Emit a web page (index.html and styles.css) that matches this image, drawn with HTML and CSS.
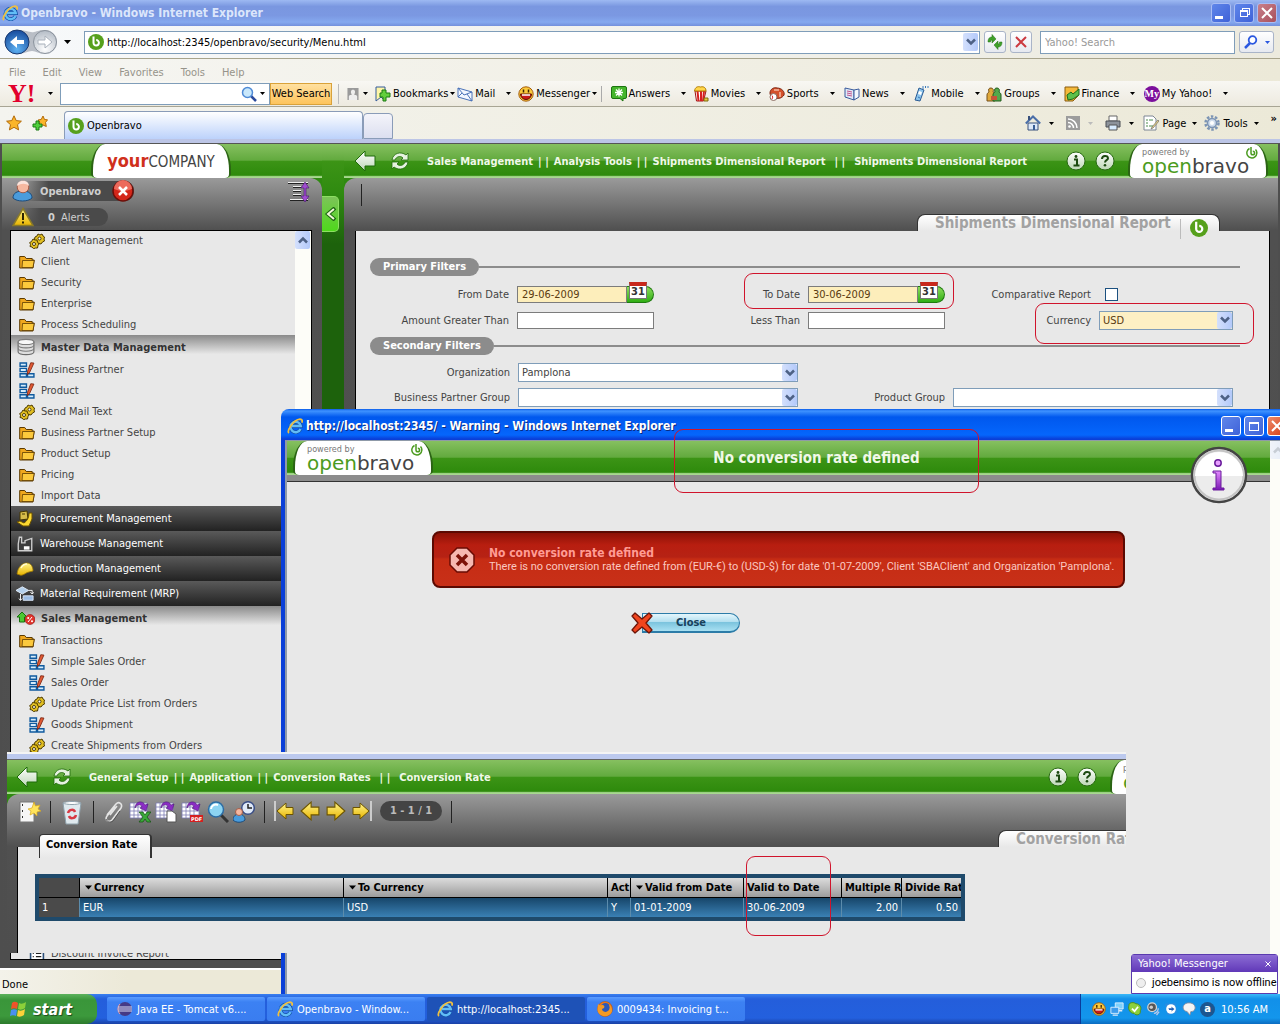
FILE: index.html
```html
<!DOCTYPE html>
<html lang="en">
  <head>
    <meta charset="UTF-8" />
    <title>Openbravo</title>
    <link rel="stylesheet" href="styles.css">
  </head>
  <body>
    <!-- Shared icons -->
    <svg class="sprite" width="0" height="0" aria-hidden="true">
      <defs>
        <linearGradient id="gYellow" x1="0" y1="0" x2="0" y2="1"><stop offset="0" stop-color="#fff48a" /><stop offset="1" stop-color="#e8b400" /></linearGradient>
        <linearGradient id="gPurple" x1="0" y1="0" x2="0" y2="1"><stop offset="0" stop-color="#e48bff" /><stop offset="1" stop-color="#7a16b4" /></linearGradient>
        <linearGradient id="gSilver" x1="0" y1="0" x2="0" y2="1"><stop offset="0" stop-color="#ffffff" /><stop offset="1" stop-color="#bcd6b4" /></linearGradient>
        <radialGradient id="gBlue" cx="0.5" cy="0.8" r="0.8"><stop offset="0" stop-color="#5fb2f2" /><stop offset="1" stop-color="#164a9c" /></radialGradient>
        <radialGradient id="gGrey" cx="0.5" cy="0.8" r="0.8"><stop offset="0" stop-color="#ffffff" /><stop offset="1" stop-color="#b4bcc6" /></radialGradient>
      </defs>
      <symbol id="ie" viewBox="0 0 16 16">
        <path d="M13.500 11A5.200 5.200 0 1 1 13.800 8H5" fill="none" stroke="#1450a8" stroke-width="3.800" />
        <path d="M13.500 11A5.200 5.200 0 1 1 13.800 8H5" fill="none" stroke="#62bdf6" stroke-width="2.400" />
        <path d="M2 15C-.5 13 6 2 13 1.200c2.500 0 2.500 2 1.800 3.500" fill="none" stroke="#f0c040" stroke-width="1.800" />
      </symbol>
      <symbol id="ob" viewBox="0 0 16 16">
        <circle cx="8" cy="8" r="8" fill="#56a01c" />
        <path d="M5.500 2.500v6.300a2.700 2.700 0 1 0 2.700-2.700" fill="none" stroke="#fff" stroke-width="2" />
      </symbol>
      <symbol id="obmark" viewBox="0 0 12 12">
        <path d="M3.500 1.500A5 5 0 1 0 9.500 2.500" fill="none" stroke="#4b9b20" stroke-width="1.500" />
        <path d="M5 0v6a1.800 1.800 0 1 0 1.800-1.800" fill="none" stroke="#4b9b20" stroke-width="1.500" />
      </symbol>
      <symbol id="nav" viewBox="0 0 56 26">
        <path d="M14 1C22 1 26 4 30 3c4-1 6-2 11-2a12 12 0 0 1 0 24c-6 0-9-3-13-3s-8 3-14 3a12 12 0 0 1 0-24z" fill="#b9bec6" />
        <circle cx="13" cy="13" r="12" fill="url(#gBlue)" stroke="#19386e" />
        <circle cx="41" cy="13" r="11.500" fill="url(#gGrey)" stroke="#8b939d" />
        <path d="M6 13l7-6v4h7v4h-7v4z" fill="#fff" />
        <path d="M48 13l-7-6v4h-7v4h7v4z" fill="#fff" stroke="#aab2bc" />
      </symbol>
      <symbol id="down" viewBox="0 0 7 4"><path d="M0 0h7L3.500 4z" fill="currentColor" /></symbol>
      <symbol id="chev" viewBox="0 0 10 8"><path d="M1 1.500l4 4 4-4" fill="none" stroke="#4d6185" stroke-width="2.500" /></symbol>
      <symbol id="reload" viewBox="0 0 16 16">
        <path d="M1 8c0-4 2-5 4-5V.5L9 5 5 9V6C4 6 3.500 7 3.500 8zM15 8c0 4-2 5-4 5v2.500L7 11l4-4v3c1 0 1.500-1 1.500-2z" fill="#3fa02a" stroke="#24701a" stroke-width=".5" />
      </symbol>
      <symbol id="cross" viewBox="0 0 12 12"><path d="M1 1l10 10M11 1L1 11" stroke="currentColor" stroke-width="2" /></symbol>
      <symbol id="lens" viewBox="0 0 16 16">
        <path d="M10 10l5 5" stroke="#2b4a9c" stroke-width="2.500" /><circle cx="6.500" cy="6.500" r="5" fill="#c9e8fb" stroke="#4f8bd6" stroke-width="1.500" />
      </symbol>
      <symbol id="find" viewBox="0 0 14 14"><path d="M6 8l-5 5" stroke="#2b58e0" stroke-width="2.500" /><circle cx="8.500" cy="5" r="3.800" fill="#fff" stroke="#2b58e0" stroke-width="1.800" /></symbol>
      <symbol id="star" viewBox="0 0 16 16"><path d="M8 .8l2.200 4.800 5.200.6-3.900 3.500 1.100 5.200L8 12.300l-4.600 2.600 1.100-5.200L.6 6.200l5.200-.6z" fill="#fbb52a" stroke="#b26a09" /></symbol>
      <symbol id="starplus" viewBox="0 0 16 16">
        <path d="M11 1l1.500 3.500 3 .3-2 2.700.8 4L11 10 7 11l.8-4L6 5l3.200-.5z" fill="#fbb52a" stroke="#b26a09" />
        <path d="M4 6h3v3h3v3H7v3H4v-3H1V9h3z" fill="#4fd03c" stroke="#1b7a14" />
      </symbol>
      <symbol id="person" viewBox="0 0 12 13"><rect width="12" height="13" fill="#9a9a9a" /><path d="M1.500 13V9c1-2 2-1 3-1.500V7C3 4 4 2 6 2s3 2 1.500 5v.5c1 .5 2-.5 3 1.500v4z" fill="#eee" /></symbol>
      <symbol id="bookmark" viewBox="0 0 16 16"><path d="M1 1h9v14l-4-4-5 4z" fill="#fff5a8" stroke="#355c9c" /><path d="M7 4h4v3h4v4h-4v4H8v-4H5V7h2z" fill="#62cf3c" stroke="#1b7a14" /></symbol>
      <symbol id="mail" viewBox="0 0 16 16"><path d="M1 2l14 4v9L1 11z" fill="#f2f7ff" stroke="#4a72b8" /><path d="M1 2l6 7 8-3M1 11l4-4M15 15l-5-7" fill="none" stroke="#4a72b8" /></symbol>
      <symbol id="smile" viewBox="0 0 16 16"><circle cx="8" cy="8" r="7.200" fill="#fbc93b" stroke="#a45c0c" /><path d="M2.500 8h11a5.500 5.500 0 0 1-11 0z" fill="#c81818" stroke="#5c1200" /><path d="M4 9h8" stroke="#fff" stroke-width="1.500" /><path d="M5.500 3.500v3M10.500 3.500v3" stroke="#3a2200" stroke-width="1.500" /></symbol>
      <symbol id="answers" viewBox="0 0 16 16"><path d="M2 .5h12a1.500 1.500 0 0 1 1.500 1.500v9a1.500 1.500 0 0 1-1.500 1.500h-2V15l-3-2.500H2A1.500 1.500 0 0 1 .5 11V2A1.500 1.500 0 0 1 2 .5z" fill="#45b52c" stroke="#1c7410" /><path d="M8 2.500v8M4 6.500h8M5 3.500l6 6M11 3.500l-6 6" stroke="#fff" stroke-width="1.300" /></symbol>
      <symbol id="movies" viewBox="0 0 16 16"><path d="M2 5l1.500 10h7L13 5z" fill="#fff" stroke="#a01010" /><path d="M4.500 5l1 10M8 5v10M11 5l-1 10" stroke="#d61f1f" stroke-width="2" /><path d="M1.500 5C2 1 5 0 7.500 1 11 0 13 2 13 5z" fill="#ffd64a" stroke="#b27c00" /><path d="M11 12h4v3h-4z" fill="#e8c83a" stroke="#7c6a10" /></symbol>
      <symbol id="sports" viewBox="0 0 16 16"><path d="M1 7C1 3 5 1 8 2c5 0 8 4 7 7-2 3-5 4-8 3C4 12 1 10 1 7z" fill="#d4502a" stroke="#7c2410" /><path d="M5 4h5M11 6v5" stroke="#f4b8a0" stroke-width="1.500" /><circle cx="4.500" cy="11" r="3.500" fill="#fff" stroke="#8c6c60" /><path d="M3 9.500q1.500 1.500 0 3.500" fill="none" stroke="#d22" /></symbol>
      <symbol id="news" viewBox="0 0 16 16"><path d="M1 2l9 2v10l-9-3z" fill="#dfe9f8" stroke="#385a9c" /><path d="M10 4l5-1v8l-5 3z" fill="#f3f7fd" stroke="#385a9c" /><path d="M3 5l5 1M3 7l5 1M3 9l5 1" stroke="#c4548c" /></symbol>
      <symbol id="mobile" viewBox="0 0 16 16"><path d="M6 2l5 2-4 11-5-1z" fill="#8cc4ec" stroke="#2c5c94" /><path d="M6 5l3 1-1 3-3-1z" fill="#fff" /><path d="M10 0v3M12.500 0v2M15 0v2M5 11l2 1" stroke="#3978ba" /></symbol>
      <symbol id="groups" viewBox="0 0 16 16"><path d="M1 15V9c0-2 1-2 2-3-1-3 0-4 2-4s3 2 2 4c1 1 2 1 2 3v6z" fill="#e0a83a" stroke="#75501a" /><path d="M7 15V9c0-2 1-2 2-3-1-3 0-4 2-4s3 2 2 4c1 1 2 1 2 3v6z" fill="#54a84c" stroke="#225c1c" /><path d="M5 10h6v4H5z" fill="#c6543a" /></symbol>
      <symbol id="finance" viewBox="0 0 16 16"><path d="M1 1h13v9l-5 5H1z" fill="#f4b93a" stroke="#8a5c10" /><path d="M3 9l4-3 2 2 6-5v6l-6 4-5 1z" fill="#5cc04a" stroke="#1c6c1c" /></symbol>
      <symbol id="home" viewBox="0 0 16 16"><path d="M3 8h10v7H3z" fill="#dce8f8" stroke="#38507c" /><path d="M.8 8.500L8 1.500l7.200 7" fill="none" stroke="#4a6ea8" stroke-width="2" /><path d="M4 1v4" stroke="#38507c" stroke-width="2" /><path d="M8 10h2v5H8z" fill="#385c94" /></symbol>
      <symbol id="feed" viewBox="0 0 14 14"><rect width="14" height="14" fill="#9c9c9c" /><circle cx="3.500" cy="10.500" r="1.300" fill="#fff" /><path d="M2 6.500a5.500 5.500 0 0 1 5.500 5.500M2 3a9 9 0 0 1 9 9" fill="none" stroke="#fff" stroke-width="1.500" /></symbol>
      <symbol id="printer" viewBox="0 0 16 16"><path d="M4 1h8v5H4z" fill="#fff" stroke="#666" /><path d="M1 6h14v6H1z" fill="#8d939b" stroke="#4a4e54" /><path d="M4 10h8v5H4z" fill="#d8ecff" stroke="#555" /></symbol>
      <symbol id="pageicon" viewBox="0 0 16 16"><path d="M1 1h9l3 3v11H1z" fill="#fff" stroke="#7c8694" /><path d="M3 5h2M3 8h2M3 11h2M6 5h4M6 11h4" stroke="#4c8c4c" /><path d="M15 5l-6 7-1 2 2-1 6-7z" fill="#f4d884" stroke="#6c6c6c" stroke-width=".7" /></symbol>
      <symbol id="gear" viewBox="0 0 16 16"><circle cx="8" cy="8" r="6.500" fill="none" stroke="#7c94b4" stroke-width="2.500" stroke-dasharray="2.500 1.600" /><circle cx="8" cy="8" r="4.500" fill="#cfdcec" stroke="#7c94b4" stroke-width="1.500" /><circle cx="8" cy="8" r="2" fill="#fff" /></symbol>
      <symbol id="user" viewBox="0 0 22 22"><path d="M1 18c0-5 4-7 10-7s9 3 9 7c-4 4-15 4-19 0z" fill="#4a9cdc" stroke="#1c4c7c" /><circle cx="11" cy="7" r="5.800" fill="#f6b8a0" stroke="#a45c48" /><path d="M5 6c0-7 12-7 12 0-3-3-8-3-12 0z" fill="#fbe4dc" /></symbol>
      <symbol id="logout" viewBox="0 0 22 22"><circle cx="11" cy="11" r="10" fill="#d4271a" stroke="#6c0e08" stroke-width="1.500" /><path d="M2 9a9 9 0 0 1 18 0q-9 4-18 0z" fill="#ec6a5c" /><path d="M7 7l8 8M15 7l-8 8" stroke="#fff" stroke-width="2.500" /></symbol>
      <symbol id="alert" viewBox="0 0 22 20"><path d="M11 1.500L21 18.500H1z" fill="url(#gYellow)" stroke="#8a7a28" stroke-width="1.500" /><path d="M11 6v7M11 14.500v2" stroke="#2c2400" stroke-width="2" /></symbol>
      <symbol id="expand" viewBox="0 0 22 22"><path d="M0 2.500h20M5 6.500h8M5 10.500h8M5 14.500h8M2 19.500h18" stroke="#222" /><path d="M0 1.500h20M5 5.500h8M5 9.500h8M5 13.500h8M2 18.500h18" stroke="#eee" /><path d="M17 1l4 6h-3v8h3l-4 6-4-6h3V7h-3z" fill="#a04cd0" stroke="#44146c" stroke-width=".6" /></symbol>
      <symbol id="back" viewBox="0 0 22 22"><path d="M1 11L11 1v5h10v10H11v5z" fill="url(#gSilver)" stroke="#1f6a0a" /></symbol>
      <symbol id="sync" viewBox="0 0 20 18"><path d="M2 8c1-7 9-9 14-5l2-2v7h-7l2-2c-3-3-7-1-8 2zM18 10c-1 7-9 9-14 5l-2 2v-7h7l-2 2c3 3 7 1 8-2z" fill="#e6f2e0" stroke="#1f6a0a" stroke-width=".8" /></symbol>
      <symbol id="folder" viewBox="0 0 16 14"><path d="M.7 13V1.500h5l1.500 2h6V5h2L14 13z" fill="#f0a81e" stroke="#5c3a00" /><path d="M3 12.500l.5-7h11.700L14 12.500z" fill="#fcc93c" stroke="#5c3a00" stroke-width=".8" /></symbol>
      <symbol id="gears" viewBox="0 0 16 16"><g fill="#e2bf22" stroke="#4e3c00"><path d="M9 1l2 1 2-1 1 2 1.500 1-.5 2 .5 2-2 1-1.500 2-2-.5-2 .5-1-2-2-1 .5-2L6 4l2-1z" /><path d="M4 6l2 1 2 0 .5 2L10 11l-1 1.500L8.500 15l-2 0-2 .7L3 14l-2-.5L1.500 11.500.700 9.500l1.800-1z" /></g><circle cx="10.500" cy="5.500" r="1.500" fill="#fff" stroke="#4e3c00" /><circle cx="5" cy="11" r="1.500" fill="#fff" stroke="#4e3c00" /></symbol>
      <symbol id="form" viewBox="0 0 15 15"><g fill="#d6ecfb" stroke="#0f5a9e" stroke-width="1.300"><path d="M1 1h6v3H1zM1 6h6v3H1zM1 11h6v3H1zM8 11h6v3H8z" /></g><path d="M14 1l-3-.3-3 8-.2 3.300 2.200-2.300z" fill="#e25a34" stroke="#7a2410" stroke-width=".8" /></symbol>
      <symbol id="report" viewBox="0 0 14 15"><path d="M1 1h12v13H1z" fill="#fff" stroke="#2a4e78" stroke-width="1.500" /><path d="M6 4h5M6 7h5M6 10h5M3 4h1M3 7h1M3 10h1" stroke="#222" stroke-width="1.200" /></symbol>
      <symbol id="db" viewBox="0 0 16 15"><path d="M1 3v9c1 3 13 3 14 0V3z" fill="#dedede" stroke="#6c6c6c" /><ellipse cx="8" cy="3" rx="7" ry="2.300" fill="#f8f8f8" stroke="#7c7c7c" /><path d="M1 6c1 3 13 3 14 0M1 9c1 3 13 3 14 0" fill="none" stroke="#7c7c7c" /></symbol>
      <symbol id="procure" viewBox="0 0 18 18"><path d="M4 2l7-1 1 8-8 1z" fill="#d8bc4a" stroke="#463600" /><path d="M13 3h3v6l-3 7H7l-6-4 3-1 4 2c3-2 5-5 5-10z" fill="#fbd832" stroke="#6a5000" /><path d="M6 4l3 0" stroke="#463600" /></symbol>
      <symbol id="factory" viewBox="0 0 16 16"><path d="M3 2h2v5h3V5l6-2v11H2V8z" fill="#3c3c3c" stroke="#cfcfcf" stroke-width="1.200" /><path d="M7 10h5v3H7z" fill="#fff" /></symbol>
      <symbol id="helmet" viewBox="0 0 18 14"><path d="M1 12C2 5 6 1 11 1c4 0 6 4 6 8l-4 1c-4 1-6 4-9 3z" fill="url(#gYellow)" stroke="#a07800" stroke-width=".8" /><path d="M5 6c1-2 3-4 6-4" stroke="#fffbd0" stroke-width="1.500" fill="none" /></symbol>
      <symbol id="mrp" viewBox="0 0 20 18"><path d="M7 1l7 4-7 4-7-4z" fill="#b4d0ec" stroke="#e4eefa" /><path d="M8 11h11v5H8z" fill="#9cbce4" stroke="#dfeafa" /><path d="M14 5h4v4M5 9v7M3 14l2 2 2-2M16 7l2 2 2-2" fill="none" stroke="#fff" /></symbol>
      <symbol id="sales" viewBox="0 0 18 14"><path d="M5 1l5 5H7.500v5h-5V6H0z" fill="#4cc832" stroke="#16700c" /><circle cx="13" cy="8.500" r="5" fill="#e2342c" stroke="#8c1010" stroke-width=".6" /><path d="M11 11l4-5" stroke="#fff" /><circle cx="11.200" cy="7" r="1" fill="#fff" /><circle cx="15" cy="10.300" r="1" fill="#fff" /></symbol>
      <symbol id="info" viewBox="0 0 20 20"><circle cx="10" cy="10" r="9" fill="url(#gSilver)" stroke="#2a6a14" /><path d="M8 8.500h3v5.500M7.500 14.500h6" stroke="#1c4a10" stroke-width="2" fill="none" /><circle cx="10" cy="5.500" r="1.400" fill="#1c4a10" /></symbol>
      <symbol id="help" viewBox="0 0 20 20"><circle cx="10" cy="10" r="9" fill="url(#gSilver)" stroke="#2a6a14" /><path d="M7 8c0-4 6-4 6-.8 0 2-3 2-3 4.300" stroke="#1c4a10" stroke-width="2" fill="none" /><circle cx="10" cy="14.300" r="1.300" fill="#1c4a10" /></symbol>
      <symbol id="bigi" viewBox="0 0 58 58">
        <circle cx="29" cy="29" r="27" fill="#ececec" stroke="#444" stroke-width="2.500" /><circle cx="29" cy="29" r="24.500" fill="none" stroke="#c4c4c4" stroke-width="2" /><path d="M5 30a24 24 0 0 1 48 0z" fill="#fff" />
        <circle cx="28" cy="17" r="3.200" fill="#e8a0ff" stroke="#6a1c9c" stroke-width="1.500" />
        <path d="M23 25h8v17h3v2H23v-2h3V27h-3z" fill="url(#gPurple)" stroke="#6a1c9c" />
      </symbol>
      <symbol id="octo" viewBox="0 0 26 26"><path d="M8 1h10l7 7v10l-7 7H8l-7-7V8z" fill="#f6b8b0" stroke="#6a0c04" stroke-width="1.500" /><path d="M8 8l10 10M18 8L8 18" stroke="#7c1208" stroke-width="3.500" /></symbol>
      <symbol id="redx" viewBox="0 0 22 22"><path d="M4 1l7 6 7-6 3 3-6 7 6 7-3 3-7-6-7 6-3-3 6-7-6-7z" fill="#f0451e" stroke="#6c1408" stroke-width="1.300" stroke-linejoin="round" /></symbol>
      <symbol id="newdoc" viewBox="0 0 22 22"><path d="M1 1h14v20H1z" fill="#f6f6f6" stroke="#777" /><path d="M3 4h1M3 10h1M3 16h1" stroke="#333" stroke-width="2" /><path d="M15 1l1.500 4L21 4l-2 4 3 2-4 1 0 4-3-3-4 2 1-4-3-2 4-1z" fill="#ffe45c" stroke="#d8a81c" stroke-width=".7" /></symbol>
      <symbol id="bin" viewBox="0 0 20 24"><path d="M1 2h18l-3 21H4z" fill="#dfe9ee" stroke="#8ea0aa" /><path d="M1 2c3-2 15-2 18 0-3 2-15 2-18 0z" fill="#fff" stroke="#8ea0aa" /><path d="M6 12c1-4 6-4 7-1M14 14c-1 4-6 4-7 1" fill="none" stroke="#d83a44" stroke-width="2.500" /></symbol>
      <symbol id="clip" viewBox="0 0 22 22"><path d="M4 14L13 3c3-3 7 0 5 4L9 19c-3 3-8 0-5-4l8-10M7 14l7-9" fill="none" stroke="#e4e4e4" stroke-width="1.600" /><path d="M17 10l-7 10c-3 2-6 1-7-2" fill="none" stroke="#555" /></symbol>
      <symbol id="grid" viewBox="0 0 22 22"><path d="M1 2h17v15H1z" fill="#fff" /><path d="M1 2h17v15H1zM1 6h17M1 10h17M1 14h17M5 2v15M9 2v15M13 2v15" fill="none" stroke="#7c7cb4" stroke-width=".8" /><path d="M6 7c0-7 8-8 10-3l3-1-2 7-6-3 2-1c-1-3-5-3-7 1z" fill="#8a2cc4" stroke="#4c1478" stroke-width=".6" /></symbol>
      <symbol id="glass" viewBox="0 0 22 22"><path d="M14 14l7 7" stroke="#333" stroke-width="3" /><circle cx="9" cy="8.500" r="7.500" fill="#8cd4f2" stroke="#2c6ca4" stroke-width="1.500" /><path d="M4 8a5 5 0 0 1 7-4" fill="none" stroke="#fff" stroke-width="2" /></symbol>
      <symbol id="clockuser" viewBox="0 0 22 22"><circle cx="15" cy="7" r="6.300" fill="#dfe9f8" stroke="#3b4f86" stroke-width="1.500" /><path d="M15 3v4h4" fill="none" stroke="#222" stroke-width="1.500" /><path d="M0 19c0-4 3-6 6-6s6 2 6 6c-3 3-9 3-12 0z" fill="#4a9cdc" stroke="#1c4c7c" /><circle cx="6" cy="11" r="3.500" fill="#f6b8a0" stroke="#a45c48" /></symbol>
      <symbol id="yleft" viewBox="0 0 18 18"><path d="M1 9l9-8v4.500h7v7h-7V17z" fill="url(#gYellow)" stroke="#6c5400" /></symbol>
      <symbol id="yright" viewBox="0 0 18 18"><path d="M17 9L8 1v4.500H1v7h7V17z" fill="url(#gYellow)" stroke="#6c5400" /></symbol>
      <symbol id="flag" viewBox="0 0 18 18"><path d="M2 3c2-2 4-1 6 0L7 9C5 8 3 8 1 9z" fill="#f0532a" /><path d="M9 3c2 1 4 1 7-1l-1 6c-3 2-5 2-7 1z" fill="#8bd03a" /><path d="M1 10c2-1 4-1 6 0l-1 6c-2-1-4-1-6 0z" fill="#4a90f0" /><path d="M8 10c2 1 4 1 7-1l-1 6c-3 2-5 2-7 1z" fill="#fbd23a" /></symbol>
      <symbol id="eclipse" viewBox="0 0 16 16"><circle cx="8" cy="8" r="7" fill="#453a86" /><path d="M3 3A7 7 0 0 0 3 13" fill="none" stroke="#f4a0a0" /><path d="M1 6h14M1 8h14M1 10h14" stroke="#dcdcf4" /></symbol>
      <symbol id="firefox" viewBox="0 0 16 16"><circle cx="8" cy="8" r="7.500" fill="#ee7a18" stroke="#b44808" stroke-width=".5" /><circle cx="8.500" cy="6.500" r="4.500" fill="#2c58b8" /><path d="M1 3c1 1 2 2 4 1 2 0 3 1 2 3l-2 1c0 3 4 4 6 2 2-1 2-4 1-7 4 4 4 9 0 11-5 3-12 0-11.500-6z" fill="#f49a24" /></symbol>
      <symbol id="net" viewBox="0 0 16 16"><path d="M6 1h9v7H6z" fill="#7cd0fc" stroke="#e4f4ff" /><path d="M1 6h9v7H1z" fill="#3c9cec" stroke="#e4f4ff" /><path d="M3 15h6M10 10h4" stroke="#dfe9f8" stroke-width="1.500" /></symbol>
      <symbol id="shield" viewBox="0 0 16 16"><path d="M1 4c0-4 6-4 8-2 5 0 7 5 5 8 1 5-5 6-7 3C2 13 0 8 1 4z" fill="#8cd03c" stroke="#4c8c10" /><path d="M4.500 7.500l3 3 4-5" fill="none" stroke="#fff" stroke-width="2" /></symbol>
      <symbol id="sound" viewBox="0 0 16 16"><circle cx="7" cy="6" r="5" fill="#555" stroke="#d4d4d4" stroke-width="1.500" /><circle cx="6" cy="6" r="2" fill="#ccc" /><path d="M9 13c3 0 5-3 5-6M12 15l3-4" fill="none" stroke="#b8c8e8" stroke-width="1.500" /></symbol>
      <symbol id="phone" viewBox="0 0 16 16"><path d="M1 2l12-1 2 11-11 3z" fill="#2c8ce0" /><circle cx="8" cy="8" r="5.500" fill="#fff" /><path d="M5 7h4l-1-2 4 3-4 3 1-2H6z" fill="#1c5cb4" /></symbol>
      <symbol id="bubble" viewBox="0 0 16 16"><path d="M8 1c9 0 9 10 2 10l-1 4-3-4C-1 10 0 1 8 1z" fill="#f4f4f4" stroke="#8c8c9c" /></symbol>
    </svg>

    <div class="desktop">
      <!-- Main browser window -->
      <div class="browser">
        <div class="titlebar">
          <svg class="i16"><use href="#ie" /></svg>
          <span class="titlebar-text">Openbravo - Windows Internet Explorer</span>
          <button class="win-btn" aria-label="Minimize"><span class="min-mark"></span></button>
          <button class="win-btn" aria-label="Restore"><span class="restore-mark"></span></button>
          <button class="win-btn win-close" aria-label="Close"><svg class="i12"><use href="#cross" /></svg></button>
        </div>

        <div class="address-bar">
          <svg class="nav-icon"><use href="#nav" /></svg>
          <svg class="caret"><use href="#down" /></svg>
          <div class="url-box">
            <svg class="i16"><use href="#ob" /></svg>
            <input type="text" aria-label="Address" value="http://localhost:2345/openbravo/security/Menu.html" />
            <span class="drop"><svg class="chev"><use href="#chev" /></svg></span>
          </div>
          <button class="tool-btn" aria-label="Refresh"><svg class="i16"><use href="#reload" /></svg></button>
          <button class="tool-btn stop" aria-label="Stop"><svg class="i12"><use href="#cross" /></svg></button>
          <input class="search-box" type="text" aria-label="Search" placeholder="Yahoo! Search" />
          <button class="tool-btn find" aria-label="Go"><svg class="i14"><use href="#find" /></svg><svg class="caret small"><use href="#down" /></svg></button>
        </div>

        <nav class="menu-bar">
          <a href="#">File</a><a href="#">Edit</a><a href="#">View</a><a href="#">Favorites</a><a href="#">Tools</a><a href="#">Help</a>
        </nav>

        <div class="yahoo-bar">
          <span class="yahoo-logo">Y!</span>
          <svg class="caret small"><use href="#down" /></svg>
          <div class="yahoo-search">
            <input type="text" aria-label="Web search" />
            <svg class="i16"><use href="#lens" /></svg>
            <svg class="caret small"><use href="#down" /></svg>
          </div>
          <button class="web-search">Web Search</button>
          <span class="grip"></span>
          <svg class="i12"><use href="#person" /></svg>
          <svg class="caret small"><use href="#down" /></svg>
          <div class="yahoo-links">
            <a class="tight" href="#"><svg class="i16"><use href="#bookmark" /></svg>Bookmarks<svg class="caret small"><use href="#down" /></svg></a>
            <a href="#"><svg class="i16"><use href="#mail" /></svg>Mail<svg class="caret small"><use href="#down" /></svg></a>
            <a class="tight last" href="#"><svg class="i16"><use href="#smile" /></svg>Messenger<svg class="caret small"><use href="#down" /></svg></a>
            <a href="#"><svg class="i16"><use href="#answers" /></svg>Answers<svg class="caret small"><use href="#down" /></svg></a>
            <a href="#"><svg class="i16"><use href="#movies" /></svg>Movies<svg class="caret small"><use href="#down" /></svg></a>
            <a href="#"><svg class="i16"><use href="#sports" /></svg>Sports<svg class="caret small"><use href="#down" /></svg></a>
            <a href="#"><svg class="i16"><use href="#news" /></svg>News<svg class="caret small"><use href="#down" /></svg></a>
            <a href="#"><svg class="i16"><use href="#mobile" /></svg>Mobile<svg class="caret small"><use href="#down" /></svg></a>
            <a href="#"><svg class="i16"><use href="#groups" /></svg>Groups<svg class="caret small"><use href="#down" /></svg></a>
            <a href="#"><svg class="i16"><use href="#finance" /></svg>Finance<svg class="caret small"><use href="#down" /></svg></a>
            <a href="#"><span class="my-badge">My</span>My Yahoo!<svg class="caret small"><use href="#down" /></svg></a>
          </div>
        </div>

        <div class="tab-bar">
          <svg class="i16"><use href="#star" /></svg>
          <svg class="i16"><use href="#starplus" /></svg>
          <div class="tab"><svg class="i16"><use href="#ob" /></svg>Openbravo</div>
          <div class="new-tab"></div>
          <div class="tab-tools">
            <svg class="i16"><use href="#home" /></svg><svg class="caret small"><use href="#down" /></svg>
            <svg class="i14"><use href="#feed" /></svg><svg class="caret small dim"><use href="#down" /></svg>
            <svg class="i16"><use href="#printer" /></svg><svg class="caret small"><use href="#down" /></svg>
            <a href="#"><svg class="i16"><use href="#pageicon" /></svg>Page<svg class="caret small"><use href="#down" /></svg></a>
            <a href="#"><svg class="i16"><use href="#gear" /></svg>Tools<svg class="caret small"><use href="#down" /></svg></a>
            <span class="more">»</span>
          </div>
        </div>

        <!-- Openbravo application -->
        <div class="app">
          <aside class="side">
            <div class="green-bar side-head">
              <div class="logo-tab company"><b>your</b><span>COMPANY</span></div>
            </div>
            <div class="side-body">
              <div class="side-info">
                <div>
                  <div class="pill user-pill"><svg class="i22"><use href="#user" /></svg><b>Openbravo</b><svg class="i22"><use href="#logout" /></svg></div>
                  <div class="pill alert-pill"><svg class="i22"><use href="#alert" /></svg><b>0</b> Alerts</div>
                </div>
                <svg class="i22"><use href="#expand" /></svg>
              </div>
              <div class="menu-frame">
                <ul class="menu">
                  <li class="sub"><svg class="i16"><use href="#gears" /></svg>Alert Management</li>
                  <li><svg class="i16"><use href="#folder" /></svg>Client</li>
                  <li><svg class="i16"><use href="#folder" /></svg>Security</li>
                  <li><svg class="i16"><use href="#folder" /></svg>Enterprise</li>
                  <li><svg class="i16"><use href="#folder" /></svg>Process Scheduling</li>
                  <li class="open"><svg class="i18"><use href="#db" /></svg>Master Data Management</li>
                  <li><svg class="i16"><use href="#form" /></svg>Business Partner</li>
                  <li><svg class="i16"><use href="#form" /></svg>Product</li>
                  <li><svg class="i16"><use href="#gears" /></svg>Send Mail Text</li>
                  <li><svg class="i16"><use href="#folder" /></svg>Business Partner Setup</li>
                  <li><svg class="i16"><use href="#folder" /></svg>Product Setup</li>
                  <li><svg class="i16"><use href="#folder" /></svg>Pricing</li>
                  <li><svg class="i16"><use href="#folder" /></svg>Import Data</li>
                  <li class="closed"><svg class="i18"><use href="#procure" /></svg>Procurement Management</li>
                  <li class="closed"><svg class="i18"><use href="#factory" /></svg>Warehouse Management</li>
                  <li class="closed"><svg class="i18"><use href="#helmet" /></svg>Production Management</li>
                  <li class="closed"><svg class="i18"><use href="#mrp" /></svg>Material Requirement (MRP)</li>
                  <li class="open"><svg class="i18"><use href="#sales" /></svg>Sales Management</li>
                  <li><svg class="i16"><use href="#folder" /></svg>Transactions</li>
                  <li class="sub"><svg class="i16"><use href="#form" /></svg>Simple Sales Order</li>
                  <li class="sub"><svg class="i16"><use href="#form" /></svg>Sales Order</li>
                  <li class="sub"><svg class="i16"><use href="#gears" /></svg>Update Price List from Orders</li>
                  <li class="sub"><svg class="i16"><use href="#form" /></svg>Goods Shipment</li>
                  <li class="sub"><svg class="i16"><use href="#gears" /></svg>Create Shipments from Orders</li>
                  <li class="sub bottom"><svg class="i16"><use href="#report" /></svg>Discount Invoice Report</li>
                </ul>
                <div class="scrollbar"><span class="scroll-up"><svg class="chev"><use href="#chev" /></svg></span></div>
              </div>
            </div>
          </aside>

          <div class="gutter"><button class="collapse" aria-label="Hide menu"><svg viewBox="0 0 14 14"><path d="M12 1L5 7l7 6" fill="none" stroke="#1a6410" stroke-width="4" /><path d="M11 2L5 7l6 5" fill="none" stroke="#f2f8d8" stroke-width="2" /></svg></button></div>

          <main class="main">
            <div class="green-bar">
              <svg class="i22"><use href="#back" /></svg>
              <svg class="sync"><use href="#sync" /></svg>
              <nav class="crumbs"><a href="#">Sales Management</a><i>| |</i><a href="#">Analysis Tools</a><i>| |</i><a href="#">Shipments Dimensional Report</a><i class="wide">| |</i><span>Shipments Dimensional Report</span></nav>
              <svg class="i20"><use href="#info" /></svg>
              <svg class="i20"><use href="#help" /></svg>
              <div class="logo-tab"><div class="ob-logo"><small>powered by</small><span><em>open</em>bravo</span><svg class="i12"><use href="#obmark" /></svg></div></div>
            </div>
            <div class="panel">
              <div class="toolbar"><span class="tool-sep"></span><div class="title-tab">Shipments Dimensional Report<span class="title-icon"><svg class="i18"><use href="#ob" /></svg></span></div></div>
              <form class="report-form">
                <h2><span>Primary Filters</span></h2>
                <div class="fields">
                  <label for="fromDate">From Date</label>
                  <div class="date"><input id="fromDate" type="text" value="29-06-2009" /><button type="button" class="cal" aria-label="Pick date"><b>31</b></button></div>
                  <label for="toDate">To Date</label>
                  <div class="date"><input id="toDate" type="text" value="30-06-2009" /><button type="button" class="cal" aria-label="Pick date"><b>31</b></button></div>
                  <label for="comparative">Comparative Report</label>
                  <div><input id="comparative" type="checkbox" /></div>
                  <label for="greater">Amount Greater Than</label>
                  <div><input id="greater" type="text" /></div>
                  <label for="less">Less Than</label>
                  <div><input id="less" type="text" /></div>
                  <label for="currency">Currency</label>
                  <div class="select required"><select id="currency"><option>USD</option></select><span class="drop"><svg class="chev"><use href="#chev" /></svg></span></div>
                </div>
                <h2><span>Secondary Filters</span></h2>
                <div class="fields secondary">
                  <label for="org">Organization</label>
                  <div class="select span2"><select id="org"><option>Pamplona</option></select><span class="drop"><svg class="chev"><use href="#chev" /></svg></span></div>
                  <label for="bpGroup" class="new-row">Business Partner Group</label>
                  <div class="select span2"><select id="bpGroup"><option></option></select><span class="drop"><svg class="chev"><use href="#chev" /></svg></span></div>
                  <label for="prodGroup">Product Group</label>
                  <div class="select span2"><select id="prodGroup"><option></option></select><span class="drop"><svg class="chev"><use href="#chev" /></svg></span></div>
                </div>
              </form>
            </div>
          </main>
        </div>
        <div class="status-bar">Done</div>
      </div>

      <!-- Warning popup -->
      <div class="popup">
        <div class="popup-title">
          <svg class="i16"><use href="#ie" /></svg>
          <span class="titlebar-text">http://localhost:2345/ - Warning - Windows Internet Explorer</span>
          <button class="win-btn" aria-label="Minimize"><span class="min-mark"></span></button>
          <button class="win-btn" aria-label="Maximize"><span class="max-mark"></span></button>
          <button class="win-btn win-close" aria-label="Close"><svg class="i12"><use href="#cross" /></svg></button>
        </div>
        <div class="popup-body">
          <div class="popup-page">
            <div class="green-bar">
              <div class="logo-tab"><div class="ob-logo"><small>powered by</small><span><em>open</em>bravo</span><svg class="i12"><use href="#obmark" /></svg></div></div>
              <h1>No conversion rate defined</h1>
              <svg class="big-info"><use href="#bigi" /></svg>
            </div>
            <div class="message">
              <svg class="i26"><use href="#octo" /></svg>
              <div>
                <h3>No conversion rate defined</h3>
                <p>There is no conversion rate defined from (EUR-€) to (USD-$) for date '01-07-2009', Client 'SBAClient' and Organization 'Pamplona'.</p>
              </div>
            </div>
            <button class="close-btn"><svg class="i22"><use href="#redx" /></svg><span>Close</span></button>
          </div>
          <div class="popup-scroll"><span class="scroll-up"><svg class="chev"><use href="#chev" /></svg></span></div>
        </div>
      </div>

      <!-- Conversion rate window -->
      <div class="rates">
        <div class="rates-strip"></div>
        <div class="green-bar">
          <svg class="i22"><use href="#back" /></svg>
          <svg class="sync"><use href="#sync" /></svg>
          <nav class="crumbs"><a href="#">General Setup</a><i>| |</i><a href="#">Application</a><i>| |</i><a href="#">Conversion Rates</a><i class="wide">| |</i><span>Conversion Rate</span></nav>
          <svg class="i20"><use href="#info" /></svg>
          <svg class="i20"><use href="#help" /></svg>
          <div class="logo-tab"><div class="ob-logo"><small>powered by</small><span><em>open</em>bravo</span></div></div>
        </div>
        <div class="panel">
          <div class="toolbar tools">
            <svg class="i22"><use href="#newdoc" /></svg>
            <span class="tool-sep"></span>
            <svg class="i24"><use href="#bin" /></svg>
            <span class="tool-sep"></span>
            <div class="tool-group">
              <svg class="i22"><use href="#clip" /></svg>
              <svg class="i22" viewBox="0 0 22 22"><use href="#grid" width="22" height="22" /><path d="M10 11h4l2 3 2-3h4l-4 5 4 5h-4l-2-3-2 3h-4l4-5z" fill="#3aa83a" stroke="#12500f" stroke-width=".7" /></svg>
              <svg class="i22" viewBox="0 0 22 22"><use href="#grid" width="22" height="22" /><path d="M12 10h5l4 3v8h-9z" fill="#fff" stroke="#555" /></svg>
              <svg class="i22" viewBox="0 0 22 22"><use href="#grid" width="22" height="22" /><rect x="9" y="14" width="13" height="7" fill="#d42020" /><text x="10" y="20" class="pdf">PDF</text></svg>
              <svg class="i22"><use href="#glass" /></svg>
              <svg class="i22"><use href="#clockuser" /></svg>
            </div>
            <span class="tool-sep"></span>
            <div class="pager">
              <svg class="i20 page-first"><use href="#yleft" /></svg>
              <svg class="i20"><use href="#yleft" /></svg>
              <svg class="i20"><use href="#yright" /></svg>
              <svg class="i20 page-last"><use href="#yright" /></svg>
            </div>
            <span class="range">1 - 1 / 1</span>
            <span class="tool-sep"></span>
            <div class="title-tab">Conversion Rate</div>
          </div>
          <div class="rates-body">
            <div class="page-tab">Conversion Rate</div>
            <table class="grid-table">
              <colgroup><col class="c-num"><col class="c-cur"><col class="c-cur"><col class="c-act"><col class="c-from"><col class="c-to"><col class="c-rate"><col class="c-rate"></colgroup>
              <thead>
                <tr><th></th><th><svg class="sort"><use href="#down" /></svg>Currency</th><th><svg class="sort"><use href="#down" /></svg>To Currency</th><th>Act</th><th><svg class="sort"><use href="#down" /></svg>Valid from Date</th><th>Valid to Date</th><th>Multiple Rate</th><th>Divide Rate</th></tr>
              </thead>
              <tbody>
                <tr><td>1</td><td>EUR</td><td>USD</td><td>Y</td><td>01-01-2009</td><td>30-06-2009</td><td class="num">2.00</td><td class="num">0.50</td></tr>
              </tbody>
            </table>
          </div>
        </div>
      </div>

      <!-- Red highlights -->
      <div class="mark mark-date"></div>
      <div class="mark mark-currency"></div>
      <div class="mark mark-warning"></div>
      <div class="mark mark-valid"></div>

      <div class="toast">
        <div class="toast-head">Yahoo! Messenger<svg><use href="#cross" /></svg></div>
        <div class="toast-body"><span class="dot"></span>joebensimo is now offline</div>
      </div>

      <div class="taskbar">
        <button class="start"><svg class="i18"><use href="#flag" /></svg>start</button>
        <button class="task"><svg class="i16"><use href="#eclipse" /></svg>Java EE - Tomcat v6....</button>
        <button class="task"><svg class="i16"><use href="#ie" /></svg>Openbravo - Window...</button>
        <button class="task active"><svg class="i16"><use href="#ie" /></svg>http://localhost:2345...</button>
        <button class="task"><svg class="i16"><use href="#firefox" /></svg>0009434: Invoicing t...</button>
        <div class="tray">
          <svg class="i14"><use href="#smile" /></svg>
          <svg class="i14"><use href="#net" /></svg>
          <svg class="i14"><use href="#shield" /></svg>
          <svg class="i14"><use href="#sound" /></svg>
          <svg class="i14"><use href="#phone" /></svg>
          <svg class="i14"><use href="#bubble" /></svg>
          <span class="avast">a</span>
          <span class="clock">10:56 AM</span>
        </div>
      </div>
    </div>
  </body>
</html>
```
FILE: styles.css
```css
* {
  box-sizing: border-box;
}

body {
  margin: 0;
  font-family: "DejaVu Sans Condensed", "DejaVu Sans", sans-serif;
  font-size: 11px;
  color: #000;
}

button,
input,
select {
  font: inherit;
  color: inherit;
  margin: 0;
  padding: 0;
}

button {
  cursor: pointer;
}

a {
  color: inherit;
  text-decoration: none;
}

svg {
  flex: none;
  display: block;
}

.sprite {
  position: absolute;
}

/* Icon sizes */
.i12 { width: 12px; height: 12px; }
.i14 { width: 14px; height: 14px; }
.i16 { width: 16px; height: 16px; }
.i18 { width: 18px; height: 18px; }
.i20 { width: 20px; height: 20px; }
.i22 { width: 22px; height: 22px; }
.i24 { width: 24px; height: 24px; }
.i26 { width: 26px; height: 26px; }
.caret { width: 7px; height: 4px; }
.caret.small { width: 5px; height: 3px; }
.caret.dim { color: #bbb; }
.chev { width: 10px; height: 8px; }

.desktop {
  position: relative;
  min-height: 100vh;
  display: flex;
  flex-direction: column;
  overflow: hidden;
}

.browser {
  flex: 1;
  display: flex;
  flex-direction: column;
  background: #ece9d8;
}

/* Title bars */
.titlebar {
  display: flex;
  align-items: center;
  gap: 3px;
  height: 26px;
  padding: 0 3px 0 2px;
  color: #dce6fb;
  background: linear-gradient(#9db9f2, #7a97e0 25%, #7b98e2 60%, #85a9ef 85%, #7390dc);
}

.titlebar-text {
  flex: 1;
  font-weight: bold;
  font-size: 12px;
  white-space: nowrap;
}

.win-btn {
  display: flex;
  align-items: center;
  justify-content: center;
  width: 20px;
  height: 20px;
  border: 1px solid #a9bdf4;
  border-radius: 3px;
  color: #fff;
  background: linear-gradient(135deg, #5f86ea, #3f62d8);
}

.win-close {
  background: linear-gradient(135deg, #c9808a, #a8505c);
}

.min-mark {
  width: 8px;
  height: 3px;
  margin: 8px 4px 0 0;
  background: #fff;
}

.restore-mark,
.max-mark {
  width: 10px;
  height: 9px;
  border: 1px solid #fff;
  border-top-width: 2px;
}

.restore-mark {
  width: 8px;
  height: 7px;
  box-shadow: 2px -2px 0 -1px #5278e4, 2px -2px 0 0 #fff;
}

/* Address bar */
.address-bar {
  display: flex;
  align-items: center;
  gap: 4px;
  height: 33px;
  padding: 0 6px 0 4px;
  background: linear-gradient(90deg, #f7f9fb, #eceade);
  border-bottom: 1px solid #a8a48c;
}

.nav-icon {
  width: 56px;
  height: 26px;
}

.url-box {
  flex: 1;
  display: flex;
  align-items: center;
  gap: 3px;
  height: 23px;
  margin-left: 9px;
  padding: 0 1px 0 3px;
  background: #fff;
  border: 1px solid #7f9db9;
}

.url-box input {
  flex: 1;
  min-width: 0;
  border: 0;
  outline: 0;
}

.drop,
.scroll-up {
  display: flex;
  align-items: center;
  justify-content: center;
  width: 15px;
  height: 18px;
  border-radius: 2px;
  background: linear-gradient(90deg, #d4e0fc, #b3c9fa);
}

.tool-btn {
  display: flex;
  align-items: center;
  justify-content: center;
  width: 22px;
  height: 22px;
  border: 1px solid #a9b4c8;
  border-radius: 3px;
  background: linear-gradient(#fff, #e6e9f0);
}

.stop {
  margin: 0 4px 0 0;
  color: #cc3a40;
}

.search-box {
  width: 195px;
  height: 23px;
  padding: 0 4px;
  border: 1px solid #7f9db9;
}

.search-box::placeholder {
  color: #999;
  opacity: 1;
}

.find {
  width: 35px;
  gap: 7px;
  color: #2b58e0;
}

/* Menu and toolbars */
.menu-bar {
  display: flex;
  align-items: center;
  gap: 17px;
  height: 22px;
  padding: 4px 9px 0;
  color: #96938a;
  background: linear-gradient(90deg, #f6f6f3, #ece9d8);
}

.yahoo-bar {
  display: flex;
  align-items: center;
  height: 26px;
  padding-left: 8px;
  background: linear-gradient(#f8f7f3, #edeadf);
  border-bottom: 1px solid #a8a594;
}

.yahoo-logo {
  width: 40px;
  font: bold 26px/24px "Liberation Serif", serif;
  color: #e2002c;
}

.yahoo-search {
  display: flex;
  align-items: center;
  gap: 3px;
  width: 210px;
  height: 22px;
  margin-left: 7px;
  padding: 0 4px 0 2px;
  background: #fff;
  border: 1px solid #7f9db9;
}

.yahoo-search input {
  flex: 1;
  min-width: 0;
  border: 0;
  outline: 0;
}

.web-search {
  width: 62px;
  height: 22px;
  white-space: nowrap;
  border: 1px solid #d9a23a;
  background: linear-gradient(#ffe0a0, #fdc45c);
}

.grip {
  width: 1px;
  height: 20px;
  margin: 0 8px 0 6px;
  background: #bbb;
}

.grip ~ .caret {
  margin-left: 4px;
}

.yahoo-links {
  flex: 1;
  display: grid;
  grid-template-columns: 82fr 61fr 92fr 82fr 76fr 75fr 69fr 73fr 77fr 80fr 136fr;
  margin-left: 7px;
}

.yahoo-links a {
  display: flex;
  align-items: center;
  gap: 2px;
  white-space: nowrap;
}

.yahoo-links .caret {
  margin-left: 9px;
}

.yahoo-links .tight .caret {
  margin-left: 0;
}

.yahoo-links .last {
  margin-right: 9px;
  border-right: 1px solid #aaa;
}

.my-badge {
  width: 16px;
  height: 16px;
  border-radius: 50%;
  background: #7b0f9c;
  color: #fff;
  font: bold 10px/16px "Liberation Serif", serif;
  text-align: center;
}

.tab-bar {
  display: flex;
  align-items: center;
  gap: 10px;
  height: 36px;
  padding: 0 3px 0 6px;
  background: linear-gradient(90deg, #f4f4ef, #ece9d8);
  border-bottom: 4px solid #bcc5e6;
}

.tab {
  align-self: flex-end;
  display: flex;
  align-items: center;
  gap: 3px;
  width: 299px;
  height: 28px;
  margin: 0 -10px 0 6px;
  padding-left: 3px;
  border: 1px solid #8a9cb8;
  border-bottom: 0;
  border-radius: 4px 4px 0 0;
  background: linear-gradient(#fff, #bcd2fb);
}

.new-tab {
  align-self: flex-end;
  width: 30px;
  height: 26px;
  border: 1px solid #8a9cb8;
  border-radius: 4px 4px 0 0;
  background: linear-gradient(#f4f4fa, #dcdff0);
}

.tab-tools {
  display: flex;
  align-items: center;
  gap: 12px;
  margin-left: auto;
}

.tab-tools > .caret {
  margin-left: -4px;
}

.tab-tools a {
  display: flex;
  align-items: center;
  gap: 3px;
}

.tab-tools a:first-of-type {
  margin-left: -3px;
}

.tab-tools a:last-of-type {
  margin-left: -5px;
}

.tab-tools a .caret {
  margin-left: 3px;
}

.more {
  align-self: flex-start;
  font-weight: bold;
  line-height: 8px;
}

/* Application frame */
.app {
  flex: 1;
  display: flex;
  padding-left: 2px;
  padding-right: 2px;
  border-top: 1px solid #555;
  background: #4e4e4e;
}

.green-bar {
  display: flex;
  align-items: center;
  height: 34px;
  color: #f0f8e8;
  background: linear-gradient(#86c060, #62aa3e 48%, #3c9416 50%, #2e8a0c 92%, #a8d890 96%);
}

.side {
  width: 320px;
  display: flex;
  flex-direction: column;
  background: #2f8a10;
}

.side-head {
  padding-left: 89px;
}

.logo-tab {
  display: flex;
  align-items: center;
  justify-content: center;
  align-self: stretch;
  width: 140px;
  background: #fff;
  border: solid #2b6414;
  border-width: 0 2px;
  border-radius: 14px 14px 6px 6px / 26px 26px 4px 4px;
}

.company {
  align-items: baseline;
  padding-top: 6px;
  font-size: 15px;
}

.company b {
  font-size: 18px;
  color: #d0301c;
}

.company span {
  color: #444;
}

.side-body {
  flex: 1;
  display: flex;
  flex-direction: column;
  padding: 0 10px 8px 8px;
  border-radius: 0 12px 0 0;
  background: linear-gradient(#9a9a9a, #505050 52px, #4e4e4e);
}

.side-info {
  display: flex;
  justify-content: space-between;
  height: 52px;
  padding: 3px 2px 0;
  color: #d4d4d4;
}

.pill {
  display: flex;
  align-items: center;
  gap: 6px;
  height: 18px;
  border-radius: 9px;
  color: #cfcfcf;
  background: linear-gradient(90deg, transparent 10%, #4a4a4a 30%);
}

.user-pill {
  width: 122px;
  height: 20px;
  margin-bottom: 7px;
}

.alert-pill {
  width: 96px;
}

.user-pill b {
  flex: 1;
}

.alert-pill b {
  margin-left: 8px;
}

.menu-frame {
  flex: 1;
  display: flex;
  border: 1px solid #000;
  background: #e8e8e8;
  min-height: 0;
}

.menu {
  flex: 1;
  display: flex;
  flex-direction: column;
  margin: -1px 0 0;
  padding: 0;
  list-style: none;
  overflow: hidden;
  color: #444;
}

.menu li {
  display: flex;
  align-items: center;
  gap: 6px;
  height: 21px;
  padding-left: 8px;
  white-space: nowrap;
}

.menu .sub {
  padding-left: 18px;
}

.menu .open {
  height: 24px;
  padding-left: 6px;
  font-weight: bold;
  color: #333;
  background: linear-gradient(#8a8a8a, #e8e8e8 80%);
}

.menu .closed {
  height: 25px;
  padding-left: 5px;
  color: #fff;
  background: linear-gradient(#5a5a5a, #222);
}

.menu .bottom {
  margin: auto 0 -5px;
}

.scrollbar {
  width: 16px;
  background: #fdfdf8;
}

.scroll-up .chev {
  rotate: 180deg;
}

.gutter {
  display: flex;
  flex-direction: column;
  width: 22px;
  padding-top: 52px;
  background: linear-gradient(#86c060, #62aa3e 16px, #3c9416 17px, #2f8a10 50px, #1d620c 100px);
}

.collapse {
  display: flex;
  align-items: center;
  justify-content: center;
  width: 17px;
  height: 36px;
  border: 1px solid #8ee064;
  border-left: 0;
  border-radius: 0 5px 5px 0;
  background: linear-gradient(#7cc458, #4fd81c);
}

.collapse svg {
  width: 14px;
  height: 14px;
}

.main {
  flex: 1;
  display: flex;
  flex-direction: column;
  background: #2f8a10;
}

.main .green-bar {
  padding: 0 10px 0 10px;
}

.sync {
  width: 20px;
  height: 18px;
  margin: 0 17px 0 14px;
}

.crumbs {
  flex: 1;
  display: flex;
  gap: 5px;
  font-weight: bold;
  white-space: nowrap;
}

.crumbs i {
  font-style: normal;
}

.crumbs .wide {
  margin: 0 4px;
}

.crumbs + svg {
  margin-right: 9px;
}

.crumbs + svg + svg {
  margin-right: 13px;
}

.ob-logo {
  position: relative;
  width: 112px;
}

.ob-logo small {
  display: block;
  font-size: 9px;
  line-height: 10px;
  color: #777;
}

.ob-logo span {
  display: block;
  font: 20px/18px "DejaVu Sans", sans-serif;
  color: #444;
}

.ob-logo em {
  font-style: normal;
  color: #4b9b20;
}

.ob-logo svg {
  position: absolute;
  top: 0;
  right: -4px;
}

.panel {
  flex: 1;
  display: flex;
  flex-direction: column;
  padding: 0 8px 0 11px;
  border-top-left-radius: 12px;
  background: linear-gradient(#9a9a9a, #505050 52px, #4e4e4e);
}

.toolbar {
  display: flex;
  align-items: center;
  height: 53px;
}

.tool-sep {
  width: 1px;
  height: 22px;
  background: #222;
}

.main .tool-sep {
  align-self: flex-start;
  margin: 6px;
}

.title-tab {
  display: flex;
  align-items: center;
  align-self: flex-end;
  z-index: 1;
  height: 17px;
  margin-left: auto;
  padding-left: 17px;
  border: 1px solid #333;
  border-bottom: 0;
  border-radius: 8px 8px 0 0;
  background: linear-gradient(#fff, #e8e8e8);
  font-size: 15px;
  font-weight: bold;
  color: #a2a2a2;
  white-space: nowrap;
}

.main .title-tab {
  width: 303px;
  margin-right: 50px;
}

.title-icon {
  align-self: flex-start;
  height: 20px;
  margin: 4px 0 0 9px;
  padding-left: 9px;
  border-left: 1px solid #bbb;
}

/* Report form */
.report-form {
  flex: 1;
  padding: 27px 29px 0 14px;
  background: #e8e8e8;
  border-left: 1px solid #000;
  border-right: 1px solid #000;
  color: #444;
}

.report-form h2 {
  display: flex;
  align-items: center;
  margin: 0 0 5px;
  font-size: 11px;
}

.report-form h2::after {
  content: "";
  flex: 1;
  height: 2px;
  background: #8c8c8c;
}

.report-form h2 span {
  height: 18px;
  padding: 0 13px;
  line-height: 18px;
  border-radius: 9px;
  color: #fff;
  background: #8c8c8c;
}

.fields {
  display: grid;
  grid-template-columns: repeat(6, 1fr);
  grid-auto-rows: 26px;
  align-items: center;
  margin-bottom: 4px;
}

.secondary {
  grid-auto-rows: 25px;
}

.fields label {
  padding-right: 5px;
  text-align: right;
  white-space: nowrap;
}

.fields .new-row {
  grid-column: 1;
}

.fields > div {
  margin: 0 7px 0 3px;
}

.fields .span2 {
  grid-column: span 2;
}

.fields input[type="text"] {
  width: 100%;
  height: 17px;
  padding: 0 4px;
  border: 1px solid #7c7c7c;
  background: #fff;
}

.fields input[type="checkbox"] {
  appearance: none;
  display: block;
  width: 13px;
  height: 13px;
  margin-left: 6px;
  border: 1px solid #1c5180;
  background: #fff;
}

.fields .date {
  display: flex;
}

.fields .date input {
  width: 110px;
  background: #fdeebb;
  color: #5a3a10;
}

.cal {
  position: relative;
  width: 27px;
  height: 17px;
  border: 1px solid #1f7a10;
  border-left: 0;
  border-radius: 0 9px 9px 0;
  background: linear-gradient(#8cdc5c, #2fae14);
}

.cal b {
  position: absolute;
  left: 2px;
  top: -5px;
  width: 18px;
  height: 17px;
  border: 1px solid #777;
  border-top: 4px solid #c8281c;
  background: #fff;
  color: #333;
  line-height: 12px;
}

.select {
  position: relative;
}

.select select {
  display: block;
  appearance: none;
  width: 100%;
  height: 19px;
  padding: 0 3px;
  border: 1px solid #7f9db9;
  background: #fff;
}

.required select {
  background: #fdf0c4;
  color: #5a3a10;
}

.select .drop {
  position: absolute;
  top: 1px;
  right: 1px;
  height: 17px;
  pointer-events: none;
}

.status-bar {
  height: 26px;
  padding: 8px 2px 0;
  border-top: 2px solid #fff;
  background: linear-gradient(90deg, #f3f2ea, #ece9d8 10%);
}

/* Popup */
.popup {
  position: absolute;
  left: 281px;
  top: 409px;
  right: -13px;
  bottom: 30px;
  display: flex;
  flex-direction: column;
  padding: 0 4px;
  border-radius: 8px 8px 0 0;
  background: linear-gradient(#0a5be8, #3f93ff 2px, #0058ee 8px, #0566fc 26px, #0a3fd8 30px);
}

.popup-title {
  display: flex;
  align-items: center;
  gap: 3px;
  height: 31px;
  padding: 3px 2px 0;
  color: #fff;
  text-shadow: 1px 1px #0a2a80;
}

.popup .win-btn {
  border-color: #fff;
}

.popup .win-close {
  background: linear-gradient(135deg, #ee8a6a, #d43c14);
}

.popup-body {
  flex: 1;
  display: flex;
  border: solid #8f9aa8;
  border-width: 1px 0 0 2px;
}

.popup-page {
  flex: 1;
  background: #e8e8e8;
}

.popup .green-bar {
  box-sizing: content-box;
  position: relative;
  padding: 0 70px 0 6px;
  border-bottom: 6px solid #8c8c8c;
  box-shadow: 0 1px #333;
}

.popup h1 {
  flex: 1;
  margin: 0;
  font-size: 15px;
  text-align: center;
}

.big-info {
  position: absolute;
  right: 22px;
  top: 5px;
  width: 58px;
  height: 58px;
}

.message {
  display: flex;
  align-items: center;
  gap: 14px;
  max-width: 693px;
  height: 57px;
  margin: 50px auto 24px;
  padding: 0 15px;
  border: 2px solid #5c0a02;
  border-radius: 8px;
  color: #fbc8c0;
  background: linear-gradient(#8c1206, #b81e10 12px, #b62214 24px, #c62c14 26px, #c83018);
  white-space: nowrap;
}

.message h3,
.message p {
  margin: 0;
  line-height: 14px;
}

.message h3 {
  font-size: 12px;
  color: #ff9c94;
}

.message p {
  font-family: Roboto, sans-serif;
}

.close-btn {
  display: flex;
  align-items: center;
  margin-left: 35%;
  padding: 0;
  border: 0;
  background: none;
  font-weight: bold;
  color: #17415c;
}

.close-btn span {
  width: 98px;
  height: 20px;
  margin-left: -11px;
  line-height: 18px;
  border: 1px solid #2c7ca8;
  border-bottom-width: 2px;
  border-radius: 0 10px 10px 0;
  background: linear-gradient(#e4f6fc, #b4e0f0 45%, #7cc4de 50%, #a8e0f2);
}

.close-btn svg {
  z-index: 1;
}

.popup-scroll {
  width: 19px;
  background: #fdfdf8;
}

.popup-scroll .scroll-up {
  opacity: 0.3;
}

/* Conversion rate window */
.rates {
  position: absolute;
  left: 7px;
  right: 154px;
  bottom: 71px;
  display: flex;
  flex-direction: column;
  height: 201px;
  overflow: hidden;
  background: #2f8a10;
}

.rates-strip {
  height: 8px;
  border-top: 2px solid #f4f4f4;
  border-bottom: 1px solid #666;
  background: #bcc9ee;
}

.rates .green-bar {
  padding-left: 9px;
}

.rates .logo-tab {
  width: 16px;
  justify-content: flex-start;
  padding-left: 11px;
  overflow: hidden;
  border-right: 0;
  border-radius: 14px 0 0 6px / 26px 0 0 4px;
}

.rates .ob-logo {
  flex: none;
}

.rates .panel {
  padding: 0 0 0 10px;
}

.tools {
  align-items: flex-start;
  gap: 8px;
  padding: 7px 0 0 2px;
}

.tools > .tool-sep {
  margin: 0 1px;
}

.tool-group {
  display: flex;
  gap: 4px;
}

.pager {
  display: flex;
  gap: 6px;
}

.page-first {
  border-left: 2px solid #ccc;
}

.page-last {
  border-right: 2px solid #ccc;
}

.pdf {
  font: bold 5px "DejaVu Sans", sans-serif;
  fill: #fff;
}

.range {
  width: 62px;
  height: 20px;
  line-height: 20px;
  border-radius: 10px;
  background: #444;
  color: #bbb;
  font-weight: bold;
  text-align: center;
}

.rates .title-tab {
  width: 128px;
  overflow: hidden;
  border-radius: 8px 0 0 0;
  border-right: 0;
}

.rates-body {
  flex: 1;
  padding: 0 161px 0 17px;
  background: #e8e8e8;
  border-left: 1px solid #000;
}

.page-tab {
  position: relative;
  width: 113px;
  height: 24px;
  margin: -13px 0 16px 4px;
  padding-left: 6px;
  line-height: 20px;
  border: solid #333;
  border-width: 1px 2px 0 1px;
  border-radius: 4px 4px 0 0;
  background: linear-gradient(#fff, #e8e8e8);
  font-weight: bold;
  white-space: nowrap;
}

.grid-table {
  width: 100%;
  table-layout: fixed;
  border-collapse: separate;
  border-spacing: 0;
  border: 4px solid #1f4a6b;
}

.grid-table th,
.grid-table td {
  height: 19px;
  padding: 0 3px;
  overflow: hidden;
  white-space: nowrap;
  text-align: left;
}

.grid-table th {
  height: 20px;
  border-left: 1px solid #000;
  border-bottom: 1px solid #000;
  background: linear-gradient(#dcdcdc, #9c9c9c);
}

.grid-table td {
  border-left: 1px solid #5c8cac;
  color: #fff;
  background: linear-gradient(#17466a, #3a80b4);
}

.grid-table th:first-child,
.grid-table td:first-child {
  border-left: 0;
  background: #4a4a4a;
}

.grid-table .num {
  text-align: right;
}

.sort {
  display: inline-block;
  width: 7px;
  height: 7px;
  margin: 0 2px;
}

.c-num { width: 40px; }
.c-act { width: 23px; }
.c-from { width: 113px; }
.c-to { width: 98px; }
.c-rate { width: 60px; }

/* Highlights */
.mark {
  position: absolute;
  border: 1px solid #d0142c;
  border-radius: 9px;
  pointer-events: none;
}

.mark-date { left: 744px; top: 273px; width: 210px; height: 36px; }
.mark-currency { left: 1035px; top: 303px; width: 219px; height: 41px; }
.mark-warning { left: 674px; top: 429px; width: 305px; height: 64px; }
.mark-valid { left: 746px; top: 856px; width: 85px; height: 80px; }

.toast {
  position: absolute;
  right: 2px;
  bottom: 30px;
  width: 147px;
  border: 1px solid #5a3aae;
  border-radius: 3px 3px 0 0;
  background: #fff;
}

.toast-head {
  display: flex;
  align-items: center;
  justify-content: space-between;
  height: 17px;
  padding: 0 6px;
  color: #fff;
  background: linear-gradient(#8c6cd4, #6038b8);
}

.toast-head svg {
  width: 6px;
  height: 6px;
}

.toast-body {
  display: flex;
  align-items: center;
  gap: 6px;
  height: 21px;
  padding-left: 4px;
  font-family: Roboto, sans-serif;
  white-space: nowrap;
}

.dot {
  flex: none;
  width: 10px;
  height: 10px;
  border: 1px solid #bbb;
  border-radius: 50%;
  background: #eee;
}

/* Taskbar */
.taskbar {
  display: flex;
  align-items: center;
  gap: 2px;
  height: 30px;
  background: linear-gradient(#3a80f0, #245edb 5px, #2360de 24px, #1941a5);
  color: #fff;
}

.start {
  display: flex;
  align-items: center;
  gap: 5px;
  width: 97px;
  height: 30px;
  margin-right: 8px;
  padding-left: 10px;
  border: 0;
  border-radius: 0 10px 10px 0;
  background: linear-gradient(#5cb25c, #3a963a 6px, #3c993c 22px, #2c7a2c);
  font-size: 16px;
  font-style: italic;
  font-weight: bold;
  text-shadow: 1px 1px 1px #1c4a1c;
}

.task {
  display: flex;
  align-items: center;
  gap: 4px;
  width: 158px;
  height: 24px;
  padding: 0 10px;
  border: 0;
  border-radius: 2px;
  background: linear-gradient(#5a9cff, #3c81f3 5px, #3a7df0);
  white-space: nowrap;
}

.task.active {
  background: #1e52b7;
}

.tray {
  display: flex;
  align-items: center;
  gap: 4px;
  width: 200px;
  height: 30px;
  margin-left: auto;
  padding: 0 12px 0 11px;
  border-left: 1px solid #0a3c9c;
  background: linear-gradient(#3ab8f8, #1290e9 5px, #1396ec 24px, #0c6cc0);
}

.avast {
  width: 15px;
  height: 15px;
  border-radius: 50%;
  background: #1c5690;
  font-weight: bold;
  line-height: 13px;
  text-align: center;
}

.clock {
  margin-left: auto;
  white-space: nowrap;
}
```
